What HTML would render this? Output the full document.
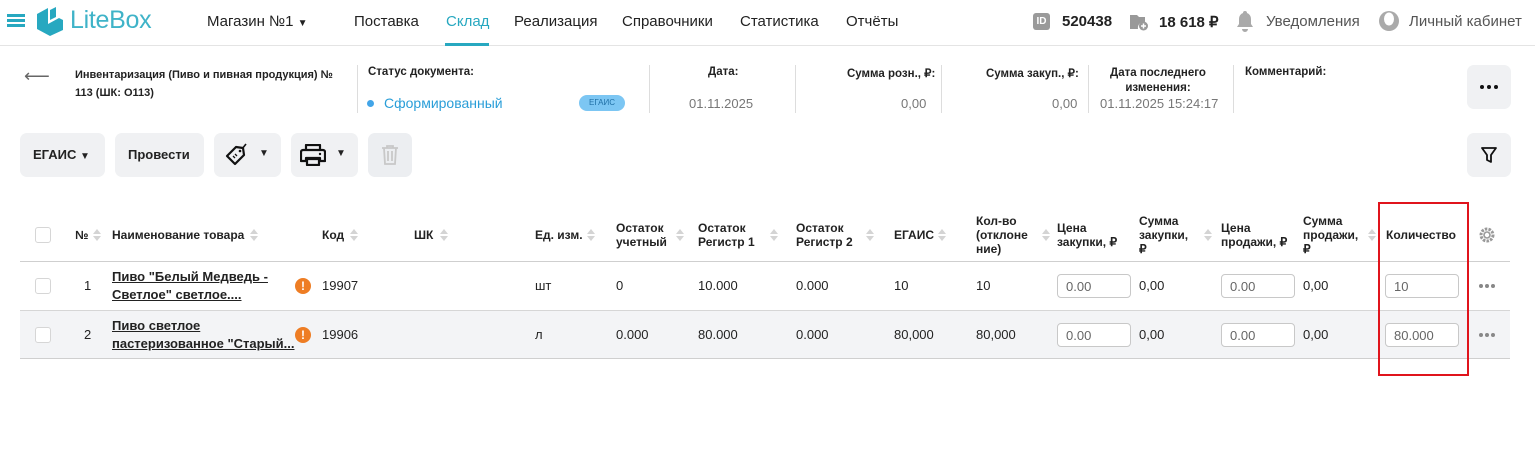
<!DOCTYPE html>
<html><head><meta charset="utf-8"><style>
*{box-sizing:border-box;margin:0;padding:0}
body{width:1535px;height:461px;background:#fff;font-family:"Liberation Sans",Arial,sans-serif;color:#222;position:relative;overflow:hidden}
.a{position:absolute;white-space:nowrap}
.nav{font-size:15px;top:13px;color:#222}
.hdr{border-bottom:1px solid #e4e4e4;height:46px;position:absolute;left:0;top:0;width:1535px}
.btn{position:absolute;top:133px;height:44px;background:#f0f1f3;border-radius:7px}
.lbl{font-size:11.5px;font-weight:bold;color:#222}
.val{font-size:13px;color:#777}
.vsep{position:absolute;width:1px;background:#ddd;top:65px;height:48px}
.th{font-size:12px;font-weight:bold;color:#222;line-height:14px}
.td{font-size:13px;color:#222}
.srt{position:absolute;width:8px;height:14px}
.srt:before,.srt:after{content:"";position:absolute;left:0;border-left:4px solid transparent;border-right:4px solid transparent}
.srt:before{top:1px;border-bottom:5px solid #d4d4d4}
.srt:after{top:8px;border-top:5px solid #d4d4d4}
.cb{position:absolute;left:35px;width:16px;height:16px;border:1.5px solid #d6d6d6;border-radius:3px;background:#fff}
.inp{position:absolute;width:74px;height:24px;border:1px solid #c8c8c8;border-radius:4px;background:#fff;font-size:13px;color:#666;padding:4px 0 0 8px}
.dots{position:absolute;width:18px;height:4px}
.dots i{position:absolute;top:0;width:4px;height:4px;border-radius:50%;background:#888}
.warn{position:absolute;left:295px;width:16px;height:16px;border-radius:50%;background:#ee7d24;color:#fff;font-size:12px;font-weight:bold;text-align:center;line-height:16px}
.name{font-size:13px;font-weight:bold;text-decoration:underline;color:#222;line-height:18px}
</style></head><body>
<div class="hdr"></div>
<div class="a" style="left:7px;top:14px;width:18px;height:3px;background:#27a8c0;box-shadow:0 5px 0 #27a8c0,0 10px 0 #27a8c0"></div>
<svg class="a" style="left:35px;top:6px" width="30" height="30" viewBox="0 0 30 30"><path d="M2 8 L13 2 L13 18 L24 12 L28 14 L28 24 L15 30 L2 23 Z" fill="#27a8c0"/><path d="M15 4 L21 1 L21 11 L15 14 Z" fill="#27a8c0"/></svg>
<div class="a" style="left:70px;top:6px;font-size:25px;color:#3fb3c8;letter-spacing:-0.3px">LiteBox</div>
<div class="a nav" style="left:207px">Магазин №1 <span style="font-size:10px">▼</span></div>
<div class="a nav" style="left:354px">Поставка</div>
<div class="a nav" style="left:446px;color:#27a8c0">Склад</div>
<div class="a" style="left:445px;top:43px;width:44px;height:3px;background:#27a8c0"></div>
<div class="a nav" style="left:514px">Реализация</div>
<div class="a nav" style="left:622px">Справочники</div>
<div class="a nav" style="left:740px">Статистика</div>
<div class="a nav" style="left:846px">Отчёты</div>
<div class="a" style="left:1033px;top:13px;width:17px;height:17px;background:#9a9a9a;border-radius:3px;color:#fff;font-size:10px;font-weight:bold;text-align:center;line-height:17px">ID</div>
<div class="a" style="left:1062px;top:13px;font-size:15px;font-weight:bold">520438</div>
<svg class="a" style="left:1129px;top:11px" width="20" height="20" viewBox="0 0 20 20"><path d="M1 4h7l2 2h6v5a6 6 0 0 0-7 7H1z" fill="#999"/><circle cx="14.5" cy="15" r="4.5" fill="#999"/><path d="M14.5 12.5v5M12 15h5" stroke="#fff" stroke-width="1.5"/></svg>
<div class="a" style="left:1159px;top:13px;font-size:15px;font-weight:bold">18 618 ₽</div>
<svg class="a" style="left:1236px;top:10px" width="18" height="22" viewBox="0 0 18 22"><path d="M9 1a2 2 0 0 1 2 2 6 6 0 0 1 4 6v5l2 3H1l2-3V9a6 6 0 0 1 4-6 2 2 0 0 1 2-2zM6 19h6a3 3 0 0 1-6 0z" fill="#aaa"/></svg>
<div class="a" style="left:1266px;top:13px;font-size:15px;color:#555">Уведомления</div>
<svg class="a" style="left:1378px;top:10px" width="22" height="22" viewBox="0 0 22 22"><circle cx="11" cy="11" r="10" fill="#aaa"/><ellipse cx="11" cy="9" rx="5" ry="6.5" fill="#fff"/></svg>
<div class="a" style="left:1409px;top:13px;font-size:15px;color:#555">Личный кабинет</div>

<div class="a" style="left:24px;top:66px;font-size:18px;color:#666">⟵</div>
<div class="a lbl" style="left:75px;top:66px;line-height:18px;font-size:11px">Инвентаризация (Пиво и пивная продукция) №<br>113 (ШК: О113)</div>
<div class="vsep" style="left:357px"></div>
<div class="a lbl" style="left:368px;top:66px">Статус документа:</div>
<div class="a" style="left:367px;top:100px;width:7px;height:7px;border-radius:50%;background:#42a5e8"></div>
<div class="a" style="left:384px;top:95px;font-size:14px;color:#2a9ed8">Сформированный</div>
<div class="a" style="left:579px;top:95px;width:46px;height:16px;border-radius:8px;background:#7cc6f3;color:#1f6fa5;font-size:8px;text-align:center;line-height:16px">ЕГАИС</div>
<div class="vsep" style="left:649px"></div>
<div class="a lbl" style="left:708px;top:66px">Дата:</div>
<div class="a val" style="left:689px;top:96px">01.11.2025</div>
<div class="vsep" style="left:795px"></div>
<div class="a lbl" style="left:847px;top:66px">Сумма розн., ₽:</div>
<div class="a val" style="left:901px;top:96px">0,00</div>
<div class="vsep" style="left:941px"></div>
<div class="a lbl" style="left:986px;top:66px">Сумма закуп., ₽:</div>
<div class="a val" style="left:1052px;top:96px">0,00</div>
<div class="vsep" style="left:1088px"></div>
<div class="a lbl" style="left:1094px;top:66px;width:128px;text-align:center;line-height:15px">Дата последнего<br>изменения:</div>
<div class="a val" style="left:1100px;top:96px">01.11.2025 15:24:17</div>
<div class="vsep" style="left:1233px"></div>
<div class="a lbl" style="left:1245px;top:66px">Комментарий:</div>
<div class="btn" style="left:1467px;top:65px;width:44px;height:44px"><div class="dots" style="left:13px;top:20px"><i style="left:0;background:#111"></i><i style="left:7px;background:#111"></i><i style="left:14px;background:#111"></i></div></div>

<div class="btn" style="left:20px;width:85px"><div class="a" style="left:13px;top:14px;font-size:13px;font-weight:bold">ЕГАИС <span style="font-size:10px">▼</span></div></div>
<div class="btn" style="left:115px;width:89px"><div class="a" style="left:13px;top:14px;font-size:13px;font-weight:bold">Провести</div></div>
<div class="btn" style="left:214px;width:67px"><svg class="a" style="left:10px;top:10px" width="24" height="24" viewBox="0 0 24 24"><path d="M3 13 L12 4 L19 5 L20 12 L11 21 Z" fill="none" stroke="#111" stroke-width="2.2" stroke-linejoin="round"/><circle cx="16" cy="8" r="1.3" fill="#111"/><path d="M18 6 L22 1" stroke="#111" stroke-width="1.6"/><path d="M9 13l2 2M11 11l2 2" stroke="#111" stroke-width="1.3"/></svg><div class="a" style="left:45px;top:15px;font-size:10px">▼</div></div>
<div class="btn" style="left:291px;width:67px"><svg class="a" style="left:9px;top:11px" width="26" height="22" viewBox="0 0 26 22"><path d="M6 1h14v5H6z M3 6h20a2 2 0 0 1 2 2v9h-5v-3H6v3H1V8a2 2 0 0 1 2-2z M7 15h12v6H7z" fill="none" stroke="#111" stroke-width="2.2" stroke-linejoin="round"/><circle cx="20" cy="10" r="1.2" fill="#111"/></svg><div class="a" style="left:45px;top:15px;font-size:10px">▼</div></div>
<div class="btn" style="left:368px;width:44px;background:#eceef1"><svg class="a" style="left:13px;top:12px" width="18" height="20" viewBox="0 0 18 20"><path d="M1 3h16M6 3V1h6v2M3 3l1 16h10l1-16M7 6v10M11 6v10" fill="none" stroke="#c8c8c8" stroke-width="1.8"/></svg></div>
<div class="btn" style="left:1467px;width:44px"><svg class="a" style="left:14px;top:14px" width="16" height="16" viewBox="0 0 16 16"><path d="M1 1h14L10 8v7L6 13V8z" fill="none" stroke="#111" stroke-width="1.8" stroke-linejoin="round"/></svg></div>

<div class="a" style="left:20px;top:261px;width:1490px;height:1px;background:#cfcfcf"></div>
<div class="a" style="left:20px;top:310px;width:1490px;height:49px;background:#f3f4f6;border-top:1px solid #d6d6d6;border-bottom:1px solid #cfcfcf"></div>

<div class="cb" style="top:227px"></div>
<div class="a th" style="left:75px;top:228px">№</div><div class="srt" style="left:93px;top:228px"></div>
<div class="a th" style="left:112px;top:228px">Наименование товара</div><div class="srt" style="left:250px;top:228px"></div>
<div class="a th" style="left:322px;top:228px">Код</div><div class="srt" style="left:350px;top:228px"></div>
<div class="a th" style="left:414px;top:228px">ШК</div><div class="srt" style="left:440px;top:228px"></div>
<div class="a th" style="left:535px;top:228px">Ед. изм.</div><div class="srt" style="left:587px;top:228px"></div>
<div class="a th" style="left:616px;top:221px">Остаток<br>учетный</div><div class="srt" style="left:676px;top:228px"></div>
<div class="a th" style="left:698px;top:221px">Остаток<br>Регистр 1</div><div class="srt" style="left:770px;top:228px"></div>
<div class="a th" style="left:796px;top:221px">Остаток<br>Регистр 2</div><div class="srt" style="left:866px;top:228px"></div>
<div class="a th" style="left:894px;top:228px">ЕГАИС</div><div class="srt" style="left:938px;top:228px"></div>
<div class="a th" style="left:976px;top:214px">Кол-во<br>(отклоне<br>ние)</div><div class="srt" style="left:1042px;top:228px"></div>
<div class="a th" style="left:1057px;top:221px">Цена<br>закупки, ₽</div><div class="srt" style="left:1204px;top:228px"></div>
<div class="a th" style="left:1139px;top:214px">Сумма<br>закупки,<br>₽</div>
<div class="a th" style="left:1221px;top:221px">Цена<br>продажи, ₽</div><div class="srt" style="left:1368px;top:228px"></div>
<div class="a th" style="left:1303px;top:214px">Сумма<br>продажи,<br>₽</div>
<div class="a th" style="left:1386px;top:228px">Количество</div>
<svg class="a" style="left:1479px;top:227px" width="16" height="16" viewBox="0 0 16 16"><circle cx="8" cy="8" r="6" fill="none" stroke="#999" stroke-width="3" stroke-dasharray="2.5 1.2"/><circle cx="8" cy="8" r="3" fill="none" stroke="#999" stroke-width="1.6"/></svg>

<div class="cb" style="top:278px"></div>
<div class="a td" style="left:84px;top:278px">1</div>
<div class="a name" style="left:112px;top:268px">Пиво "Белый Медведь -<br>Светлое" светлое....</div>
<div class="warn" style="top:278px">!</div>
<div class="a td" style="left:322px;top:278px">19907</div>
<div class="a td" style="left:535px;top:278px">шт</div>
<div class="a td" style="left:616px;top:278px">0</div>
<div class="a td" style="left:698px;top:278px">10.000</div>
<div class="a td" style="left:796px;top:278px">0.000</div>
<div class="a td" style="left:894px;top:278px">10</div>
<div class="a td" style="left:976px;top:278px">10</div>
<div class="inp" style="left:1057px;top:274px">0.00</div>
<div class="a td" style="left:1139px;top:278px">0,00</div>
<div class="inp" style="left:1221px;top:274px">0.00</div>
<div class="a td" style="left:1303px;top:278px">0,00</div>
<div class="inp" style="left:1385px;top:274px">10</div>
<div class="dots" style="left:1479px;top:284px"><i style="left:0"></i><i style="left:6px"></i><i style="left:12px"></i></div>

<div class="cb" style="top:327px"></div>
<div class="a td" style="left:84px;top:327px">2</div>
<div class="a name" style="left:112px;top:317px">Пиво светлое<br>пастеризованное "Старый...</div>
<div class="warn" style="top:327px">!</div>
<div class="a td" style="left:322px;top:327px">19906</div>
<div class="a td" style="left:535px;top:327px">л</div>
<div class="a td" style="left:616px;top:327px">0.000</div>
<div class="a td" style="left:698px;top:327px">80.000</div>
<div class="a td" style="left:796px;top:327px">0.000</div>
<div class="a td" style="left:894px;top:327px">80,000</div>
<div class="a td" style="left:976px;top:327px">80,000</div>
<div class="inp" style="left:1057px;top:323px">0.00</div>
<div class="a td" style="left:1139px;top:327px">0,00</div>
<div class="inp" style="left:1221px;top:323px">0.00</div>
<div class="a td" style="left:1303px;top:327px">0,00</div>
<div class="inp" style="left:1385px;top:323px">80.000</div>
<div class="dots" style="left:1479px;top:333px"><i style="left:0"></i><i style="left:6px"></i><i style="left:12px"></i></div>

<div class="a" style="left:1378px;top:202px;width:91px;height:174px;border:2px solid #e0141c"></div>
</body></html>
